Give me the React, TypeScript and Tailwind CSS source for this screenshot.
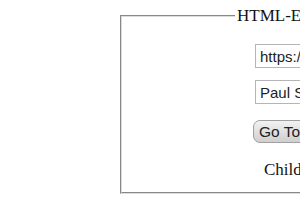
import React from "react";

export default function App() {
  return (
    <div className="w-[300px] h-[210px] overflow-hidden bg-white">
      <fieldset className="ml-[120px] mt-[6px] w-[400px] h-[188px] p-0 border-2 [border-style:groove] border-[#dcdcdc] min-w-0">
        <legend className="ml-[113px] px-[2px] text-[17px] leading-[20px] text-[#111] font-['Liberation_Serif',serif]">
          HTML-Element
        </legend>
        <div className="flex flex-col items-start">
          <input
            readOnly
            value="https://www.example.com"
            className="ml-[133px] mt-[18px] w-[180px] h-[24px] px-[4px] border border-[#b5b5b5] text-[15px] text-[#222] font-['Liberation_Sans',sans-serif] outline-none"
          />
          <input
            readOnly
            value="Paul Smith"
            className="ml-[133px] mt-[12px] w-[180px] h-[24px] px-[4px] border border-[#b5b5b5] text-[15px] text-[#222] font-['Liberation_Sans',sans-serif] outline-none"
          />
          <button className="ml-[131px] mt-[16px] h-[23px] px-[5px] rounded-[7px] border border-[#a0a0a0] bg-gradient-to-b from-[#f2f2f2] to-[#cfcfcf] text-[15.5px] leading-[20px] text-[#222] font-['Liberation_Sans',sans-serif] whitespace-nowrap">
            Go To Link
          </button>
          <div className="ml-[142px] mt-[17px] text-[17px] leading-[20px] text-[#111] font-['Liberation_Serif',serif]">
            Child Component
          </div>
        </div>
      </fieldset>
    </div>
  );
}
